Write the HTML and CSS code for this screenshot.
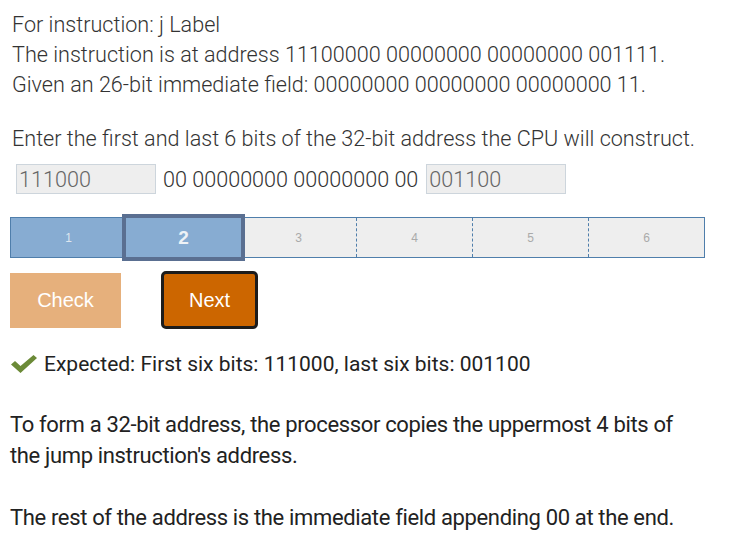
FILE: index.html
```html
<!DOCTYPE html>
<html>
<head>
<meta charset="utf-8">
<link rel="stylesheet" href="styles.css">
</head>
<body>
<div class="page">
  <div class="prompt">
    <div class="line">For instruction: j Label</div>
    <div class="line">The instruction is at address 11100000 00000000 00000000 001111.</div>
    <div class="line">Given an 26-bit immediate field: 00000000 00000000 00000000 11.</div>
  </div>
  <div class="question">Enter the first and last 6 bits of the 32-bit address the CPU will construct.</div>
  <div class="answer-row">
    <input class="bits" type="text" value="111000">
    <span class="mid">00 00000000 00000000 00</span>
    <input class="bits" type="text" value="001100">
  </div>
  <div class="progress">
    <div class="seg done">1</div>
    <div class="seg done current">2</div>
    <div class="seg first-todo">3</div>
    <div class="seg">4</div>
    <div class="seg">5</div>
    <div class="seg">6</div>
  </div>
  <div class="buttons">
    <button class="btn check">Check</button>
    <button class="btn next">Next</button>
  </div>
  <div class="feedback">
    <svg class="tick" width="28" height="20" viewBox="0 0 28 20"><path d="M1 10.5 L5 7 L10.5 12 L23.5 1 L27 4 L10.5 19 Z" fill="#6b8a37"/></svg>
    <span>Expected: First six bits: 111000, last six bits: 001100</span>
  </div>
  <div class="explain">
    <p>To form a 32-bit address, the processor copies the uppermost 4 bits of the jump instruction's address.</p>
    <p>The rest of the address is the immediate field appending 00 at the end.</p>
  </div>
</div>
</body>
</html>
```
FILE: styles.css
```css
html, body { margin: 0; padding: 0; background: #fff; }
.page {
  padding: 10px 10px 0 10px;
  font-family: Roboto, "Liberation Sans", sans-serif;
  color: #333;
}
.prompt {
  padding-left: 2px;
  font-weight: 300;
  font-size: 21.6px;
  line-height: 30px;
}
.question {
  margin-top: 24px;
  padding-left: 2px;
  font-weight: 300;
  font-size: 21.6px;
  line-height: 30px;
}
.answer-row {
  display: flex;
  align-items: center;
  margin-top: 10px;
  padding-left: 6px;
  font-weight: 300;
  font-size: 21.6px;
}
.bits {
  width: 140px;
  height: 30px;
  box-sizing: border-box;
  border: 1px solid #cdd5dc;
  background: #eeeeee;
  font-family: Roboto, "Liberation Sans", sans-serif;
  font-weight: 300;
  font-size: 21.6px;
  color: #666;
  padding: 0 2px;
  margin: 0;
}
.mid { margin: 0 8px 0 7px; }
.progress {
  display: flex;
  margin-top: 23px;
  width: 695px;
  height: 41px;
  box-sizing: border-box;
  border: 1px solid #4f7eab;
  background: #eeeeee;
}
.seg {
  flex: 1 1 0;
  box-sizing: border-box;
  display: flex;
  align-items: center;
  justify-content: center;
  font-family: "Liberation Sans", Arial, sans-serif;
  font-size: 12px;
  color: #aaa;
  border-left: 1px dashed #4f7eab;
}
.seg:first-child { border-left: none; }
.seg.done { background: #87acd2; color: #dde6ef; border-left: none; }
.seg.first-todo { border-left: none; }
.seg.current {
  position: relative;
  outline: 4px solid #5a6f91;
  outline-offset: 0;
  margin: 0;
  font-weight: bold;
  font-size: 19px;
  color: #eef2f6;
}
.buttons {
  display: flex;
  align-items: center;
  gap: 40px;
  margin-top: 13px;
}
.btn {
  font-family: "Liberation Sans", Arial, sans-serif;
  font-size: 20px;
  color: #fff;
  margin: 0;
  cursor: pointer;
}
.check {
  width: 111px;
  height: 55px;
  background: #e6b07c;
  border: none;
}
.next {
  width: 97px;
  height: 58px;
  background: #cc6600;
  border: 3px solid #1c1c1c;
  border-radius: 5px;
}
.feedback {
  display: flex;
  align-items: center;
  gap: 6px;
  margin-top: 23px;
  font-size: 21px;
  color: #222;
}
.tick { flex: none; }
.explain {
  margin-top: 33px;
  max-width: 680px;
  font-size: 22px;
  letter-spacing: -0.35px;
  line-height: 31px;
  color: #222;
}
.explain p { margin: 0 0 31px 0; }
```
